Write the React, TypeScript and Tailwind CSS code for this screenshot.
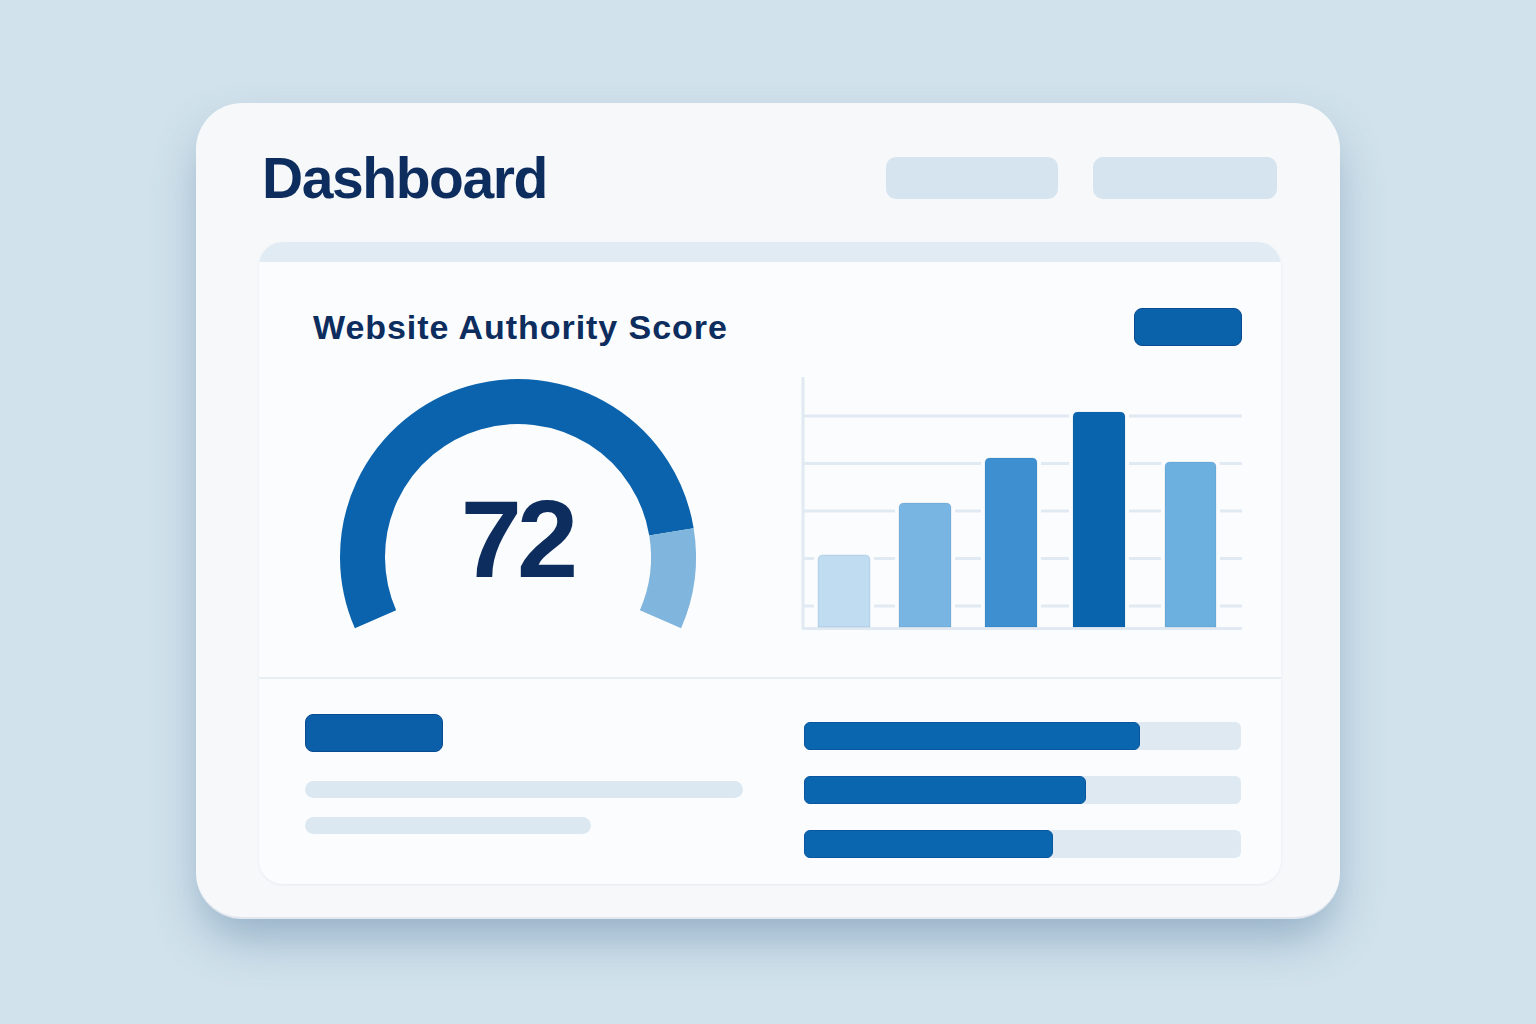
import React from "react";

const ink = "#0c2d5e";
const brand = "#0a62ab";

// polar helper: angle in degrees, counter-clockwise from the +x axis, y down
function pt(cx: number, cy: number, r: number, deg: number) {
  const a = (deg * Math.PI) / 180;
  return [cx + r * Math.cos(a), cy - r * Math.sin(a)];
}

function arc(cx: number, cy: number, r: number, from: number, to: number) {
  const [x0, y0] = pt(cx, cy, r, from);
  const [x1, y1] = pt(cx, cy, r, to);
  const large = Math.abs(from - to) > 180 ? 1 : 0;
  return `M${x0} ${y0} A${r} ${r} 0 ${large} 1 ${x1} ${y1}`;
}

function ScoreGauge({ value }: { value: number }) {
  const cx = 205;
  const cy = 187;
  const r = 155.5;
  return (
    <svg width={440} height={262} viewBox="0 0 440 262">
      <path d={arc(cx, cy, r, 203.6, 9.3)} fill="none" stroke="#0a63ac" strokeWidth={45} />
      <path d={arc(cx, cy, r, 9.3, -23.6)} fill="none" stroke="#80b5dd" strokeWidth={45} />
      <text
        x={cx - 1}
        y={207}
        textAnchor="middle"
        fill={ink}
        fontSize={110}
        fontWeight={700}
        letterSpacing={-5}
        style={{ fontFamily: '"Liberation Sans", Arial, sans-serif' }}
      >
        {value}
      </text>
    </svg>
  );
}

const bars = [
  { x: 18, w: 52, top: 185, color: "#c0dcf1" },
  { x: 99, w: 52, top: 133, color: "#79b5e2" },
  { x: 185, w: 52, top: 88, color: "#3d8fd0" },
  { x: 273, w: 52, top: 42, color: "#0a64ad" },
  { x: 365, w: 51, top: 92, color: "#6cb0df" },
];

function BarChart() {
  const base = 257;
  const grid = [46, 93.5, 141, 188.5, 236];
  return (
    <svg width={442} height={262} viewBox="0 0 442 262">
      {grid.map((y) => (
        <line key={y} x1={3} x2={442} y1={y} y2={y} stroke="#e1eaf3" strokeWidth={3} />
      ))}
      <line x1={3} x2={3} y1={7} y2={259} stroke="#e1eaf3" strokeWidth={3} />
      <line x1={2} x2={442} y1={258.5} y2={258.5} stroke="#e1eaf3" strokeWidth={3} />
      {bars.map((b) => {
        const rad = 5;
        const d = `M${b.x} ${base} V${b.top + rad} Q${b.x} ${b.top} ${b.x + rad} ${b.top} H${b.x + b.w - rad} Q${b.x + b.w} ${b.top} ${b.x + b.w} ${b.top + rad} V${base} Z`;
        return (
          <g key={b.x}>
            <rect x={b.x - 4} y={b.top - 4} width={b.w + 8} height={base - b.top + 2} rx={7} fill="#fbfcfd" />
            <path d={d} fill={b.color} stroke="rgba(10,70,140,0.12)" strokeWidth={1} />
          </g>
        );
      })}
    </svg>
  );
}

function Progress({ pct }: { pct: number }) {
  return (
    <div className="h-[28px] w-full rounded-md bg-[#dfe9f1] flex">
      <div
        className="h-full rounded-md bg-[#0a66ae] border border-[#0a56a0]"
        style={{ width: `${pct}%` }}
      />
    </div>
  );
}

export default function App() {
  return (
    <div
      className="min-h-screen w-full bg-[#d1e2ec] pt-[103px] pl-[196px] pb-[105px]"
      style={{ fontFamily: '"Liberation Sans", Arial, sans-serif' }}
    >
      <div className="w-[1144px] h-[816px] rounded-[46px] bg-[#f6f8fa] border-b-2 border-[#e2e8ee] shadow-[0_24px_48px_-6px_rgba(70,110,150,0.45)] pt-[54px] pl-[63px] pr-[59px] pb-[33px] flex flex-col">
        <header className="h-[42px] flex items-center justify-between">
          <h1 className="ml-[3px] text-[57px] leading-none font-bold tracking-[-0.025em] text-[#0c2d5e]">
            Dashboard
          </h1>
          <div className="flex gap-[35px] mr-[4px]">
            <div className="w-[172px] h-[42px] rounded-[10px] bg-[#d5e4ee]" />
            <div className="w-[184px] h-[42px] rounded-[10px] bg-[#d5e4ee]" />
          </div>
        </header>

        <section className="mt-[43px] flex-1 rounded-[24px] bg-[#fbfcfd] overflow-hidden flex flex-col shadow-[0_1px_3px_rgba(120,150,180,0.12)]">
          <div className="h-[20px] bg-[#e1ebf3]" />

          <div className="pt-[46px] pl-[54px] pr-[39px] pb-[45px] border-b-2 border-[#e6edf3]">
            <div className="h-[38px] flex items-center justify-between">
              <h2 className="text-[34px] leading-none font-bold tracking-[0.028em]" style={{ color: ink }}>
                Website Authority Score
              </h2>
              <div className="w-[108px] h-[38px] rounded-lg border border-[#084b93]" style={{ background: brand }} />
            </div>
            <div className="mt-[24px] flex justify-between">
              <ScoreGauge value={72} />
              <BarChart />
            </div>
          </div>

          <div className="flex-1 pt-[35px] pl-[46px] pr-[40px] flex gap-[61px]">
            <div className="w-[438px] flex flex-col">
              <div className="w-[138px] h-[38px] rounded-lg bg-[#0b5fa9] border border-[#084b93]" />
              <div className="mt-[29px] h-[17px] w-full rounded-full bg-[#dce8f1]" />
              <div className="mt-[19px] h-[17px] w-[286px] rounded-full bg-[#dce8f1]" />
            </div>
            <div className="flex-1 pt-[8px] flex flex-col gap-[26px]">
              <Progress pct={76.8} />
              <Progress pct={64.5} />
              <Progress pct={57} />
            </div>
          </div>
        </section>
      </div>
    </div>
  );
}
